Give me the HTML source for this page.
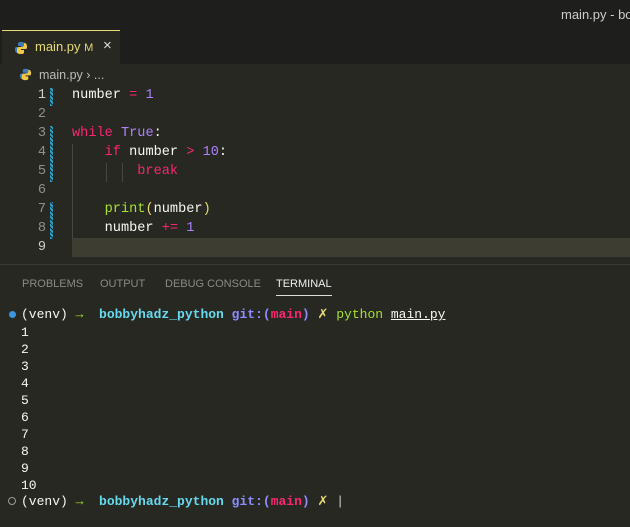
<!DOCTYPE html>
<html><head><style>
body{margin:0;width:630px;height:526px;overflow:hidden;background:#272822;font-family:"Liberation Sans",sans-serif;position:relative}
.title{position:absolute;left:0;top:0;width:630px;height:30px;background:#1e1f1c;overflow:hidden}
.title span{position:absolute;left:561px;top:7px;color:#ccc;font-size:13px;white-space:nowrap}
.tabs{position:absolute;left:0;top:30px;width:630px;height:34px;background:#1e1f1c}
.tab{position:absolute;left:2px;top:0;width:118px;height:34px;background:#272822;border-top:1px solid #e6db74;box-sizing:border-box}
.mono{font-family:"Liberation Mono",monospace;font-size:13.6px}
.code{position:absolute;left:0;top:88px;width:630px}
.ln{position:absolute;left:0;width:46px;text-align:right;color:#90908a}
.cl{position:absolute;left:72px;color:#f8f8f2;white-space:pre}
.k{color:#f92672}.n{color:#ae81ff}.f{color:#a6e22e}.p{color:#f8f8f2}
.gut{position:absolute;left:50px;width:3px;background:repeating-linear-gradient(45deg,#2aa1c8 0 2px,#272822 2px 3px)}
.ig{position:absolute;width:1px;background:#464741}
.panel{position:absolute;left:0;top:264px;width:630px;height:262px;border-top:1px solid #3a3a36}
.ptab{position:absolute;top:13px;font-size:11px;color:#8a8a85}
.t{position:absolute;left:21px;color:#f8f8f2;white-space:pre;font-size:13px}
.c{color:#66d9ef;font-weight:bold}.b{color:#8c8cff;font-weight:bold}.r{color:#f92672;font-weight:bold}.y{color:#e6db74}.g{color:#a6e22e}
</style></head><body>
<div class="title"><span>main.py - bo</span></div>
<div class="tabs"><div class="tab">
<svg style="position:absolute;left:12px;top:10px" width="14" height="14" viewBox="0 0 14 14"><path d="M7 1C4 1 4 2 4 3v2h3v1H2C1 6 1 8 1 9s1 3 2 3h1v-2c0-1 1-2 2-2h3c1 0 2-1 2-2V3c0-1-1-2-4-2z" fill="#3d7ab8"/><path d="M7 13c3 0 3-1 3-2V9H7V8h5c1 0 1-2 1-3s-1-3-2-3h-1v2c0 1-1 2-2 2H5C4 6 3 7 3 8v3c0 1 1 2 4 2z" fill="#f4c842"/></svg>
<span style="position:absolute;left:33px;top:8px;font-size:13px;color:#e6db74">main.py <span style="font-size:11px">M</span></span>
<span style="position:absolute;left:101px;top:6px;font-size:15px;color:#ddd">×</span>
</div></div>
<svg style="position:absolute;left:19px;top:68px" width="13" height="13" viewBox="0 0 14 14"><path d="M7 1C4 1 4 2 4 3v2h3v1H2C1 6 1 8 1 9s1 3 2 3h1v-2c0-1 1-2 2-2h3c1 0 2-1 2-2V3c0-1-1-2-4-2z" fill="#3d7ab8"/><path d="M7 13c3 0 3-1 3-2V9H7V8h5c1 0 1-2 1-3s-1-3-2-3h-1v2c0 1-1 2-2 2H5C4 6 3 7 3 8v3c0 1 1 2 4 2z" fill="#f4c842"/></svg>
<span style="position:absolute;left:39px;top:68px;font-size:12.5px;color:#bbb">main.py › ...</span>
<div class="code mono">
<div style="position:absolute;left:72px;top:150px;width:558px;height:19px;background:#3e3d32"></div>
<div class="gut" style="top:0px;height:18px"></div>
<div class="gut" style="top:38px;height:56px"></div>
<div class="gut" style="top:114px;height:37px"></div>
<div class="ig" style="left:72px;top:56px;height:95px"></div>
<div class="ig" style="left:106px;top:75px;height:19px"></div>
<div class="ig" style="left:122px;top:75px;height:19px"></div>
<div class="ln" style="top:0px;color:#ccc">1</div><div class="cl" style="top:0px">number <span class="k">=</span> <span class="n">1</span></div>
<div class="ln" style="top:19px">2</div>
<div class="ln" style="top:38px">3</div><div class="cl" style="top:38px"><span class="k">while</span> <span class="n">True</span>:</div>
<div class="ln" style="top:57px">4</div><div class="cl" style="top:57px">    <span class="k">if</span> number <span class="k">&gt;</span> <span class="n">10</span>:</div>
<div class="ln" style="top:76px">5</div><div class="cl" style="top:76px">        <span class="k">break</span></div>
<div class="ln" style="top:95px">6</div>
<div class="ln" style="top:114px">7</div><div class="cl" style="top:114px">    <span class="f">print</span><span class="y">(</span>number<span class="y">)</span></div>
<div class="ln" style="top:133px">8</div><div class="cl" style="top:133px">    number <span class="k">+=</span> <span class="n">1</span></div>
<div class="ln" style="top:152px;color:#ccc">9</div>
</div>
<div class="panel">
<span class="ptab" style="left:22px">PROBLEMS</span>
<span class="ptab" style="left:100px">OUTPUT</span>
<span class="ptab" style="left:165px">DEBUG CONSOLE</span>
<span class="ptab" style="left:276px;color:#eee;border-bottom:1px solid #ddd;padding-bottom:5px">TERMINAL</span>
</div>
<div class="mono">
<div style="position:absolute;left:9px;top:311px;width:7px;height:7px;border-radius:50%;background:#3a96dd"></div>
<div class="t" style="top:307px">(venv) <span class="g">→</span>  <span class="c">bobbyhadz_python</span> <span class="b">git:(</span><span class="r">main</span><span class="b">)</span> <span class="y">✗</span> <span class="g">python</span> <span style="text-decoration:underline">main.py</span></div>
<div class="t" style="top:325px">1</div><div class="t" style="top:342px">2</div><div class="t" style="top:359px">3</div><div class="t" style="top:376px">4</div><div class="t" style="top:393px">5</div><div class="t" style="top:410px">6</div><div class="t" style="top:427px">7</div><div class="t" style="top:444px">8</div><div class="t" style="top:461px">9</div><div class="t" style="top:478px">10</div>
<div style="position:absolute;left:8px;top:497px;width:6px;height:6px;border-radius:50%;border:1px solid #999"></div>
<div class="t" style="top:494px">(venv) <span class="g">→</span>  <span class="c">bobbyhadz_python</span> <span class="b">git:(</span><span class="r">main</span><span class="b">)</span> <span class="y">✗</span> <span style="color:#ccc">|</span></div>
</div>
</body></html>
